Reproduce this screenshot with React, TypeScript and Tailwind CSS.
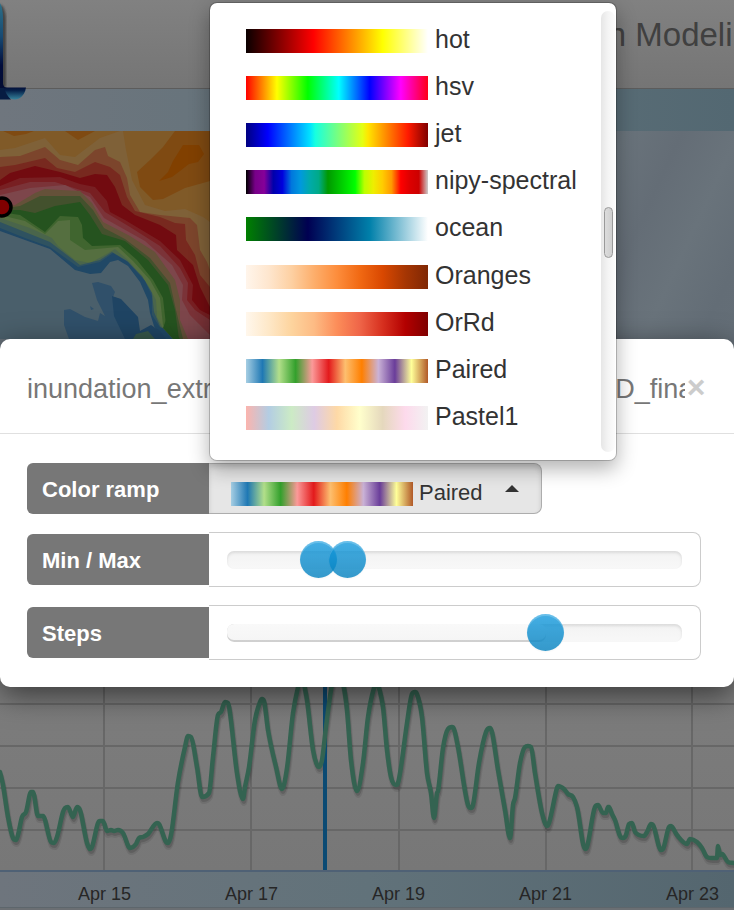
import { useState } from "react";

type Ramp = { name: string; fill: string };

const paired =
  "bg-[linear-gradient(to_right,#a6cee3,#1f78b4,#b2df8a,#33a02c,#fb9a99,#e31a1c,#fdbf6f,#ff7f00,#cab2d6,#6a3d9a,#ffff99,#b15928)]";

const ramps: Ramp[] = [
  { name: "hot", fill: "bg-[linear-gradient(to_right,#0a0000,#ff0000_37%,#ffff00_75%,#ffffff)]" },
  {
    name: "hsv",
    fill: "bg-[linear-gradient(to_right,#ff0000,#ffff00_17%,#00ff00_34%,#00ffff_51%,#0000ff_68%,#ff00ff_85%,#ff0018)]",
  },
  {
    name: "jet",
    fill: "bg-[linear-gradient(to_right,#000080,#0000ff_12%,#00e0ff_35%,#16ffe1_38%,#e4ff13_64%,#ffe600_67%,#ff1a00_89%,#800000)]",
  },
  {
    name: "nipy-spectral",
    fill: "bg-[linear-gradient(to_right,#000000,#770088_5%,#860099_10%,#0000aa_15%,#0000dd_20%,#0077dd_25%,#0099dd_30%,#00aaaa_35%,#00aa88_40%,#009900_45%,#00bb00_50%,#00dd00_55%,#00ff00_60%,#bbff00_65%,#eeee00_70%,#ffcc00_75%,#ff9900_80%,#ff0000_85%,#dd0000_90%,#cc0000_95%,#cccccc)]",
  },
  { name: "ocean", fill: "bg-[linear-gradient(to_right,#008000,#000052_34%,#0080aa_68%,#ffffff)]" },
  {
    name: "Oranges",
    fill: "bg-[linear-gradient(to_right,#fff5eb,#fee6ce,#fdd0a2,#fdae6b,#fd8d3c,#f16913,#d94801,#a63603,#7f2704)]",
  },
  {
    name: "OrRd",
    fill: "bg-[linear-gradient(to_right,#fff7ec,#fee8c8,#fdd49e,#fdbb84,#fc8d59,#ef6548,#d7301f,#b30000,#7f0000)]",
  },
  { name: "Paired", fill: paired },
  {
    name: "Pastel1",
    fill: "bg-[linear-gradient(to_right,#fbb4ae,#b3cde3,#ccebc5,#decbe4,#fed9a6,#ffffcc,#e5d8bd,#fddaec,#f2f2f2)]",
  },
];

const contours: [string, string][] = [
  ["#7f6138", "0,150 15,148 45,138 60,155 75,157 100,138 120,131 123,131 126,150 132,180 145,205 165,211 185,209 203,217 210,222"],
  ["#7c452c", "0,157 20,156 45,147 60,160 78,165 95,150 105,147 108,156 120,162 127,178 130,195 140,212 160,215 190,218 197,225 200,250 207,262 210,270"],
  ["#78291f", "0,167 15,165 45,158 57,168 75,172 95,162 110,167 120,175 127,197 135,211 160,217 175,223 185,224 186,240 195,255 200,275 210,287"],
  ["#720b10", "0,180 10,173 35,166 60,172 80,178 95,174 107,175 115,187 122,205 135,215 160,225 176,235 177,250 193,265 200,287 210,307"],
  ["#781f22", "0,186 20,178 60,177 80,184 95,187 107,201 110,212 125,220 160,241 180,260 193,285 192,300 200,310 210,315"],
  ["#7b3338", "0,190 30,182 55,182 90,193 105,212 130,227 160,246 180,268 188,283 187,300 195,310 210,320"],
  ["#7d464b", "0,195 30,188 65,185 90,197 104,218 145,241 172,265 183,285 182,300 190,315 200,325 210,335"],
  ["#655139", "0,208 15,205 35,193 45,189 60,190 80,191 92,203 103,222 130,236 155,252 175,280 180,300 180,320 188,339"],
  ["#43512d", "0,209 20,206 40,196 60,196 80,196 93,210 104,228 125,239 150,258 170,283 176,310 183,339"],
  ["#25531f", "0,210 20,210 35,213 55,206 80,202 90,215 102,234 125,241 148,260 168,285 175,310 179,339"],
  ["#40652f", "0,212 20,215 45,232 60,216 78,217 82,225 83,238 92,246 120,245 137,260 153,280 163,298 166,325 174,339"],
  ["#556f40", "0,215 25,221 45,234 58,221 70,220 70,240 85,250 118,247 133,261 150,280 160,298 163,325 173,339"],
  ["#4a654b", "0,218 30,228 52,238 58,246 75,260 90,263 103,256 115,249 130,262 148,285 156,300 157,317 165,332 172,339"],
  ["#2f5260", "0,222 30,234 50,242 80,265 100,260 112,252 127,261 142,276 152,293 154,312 160,326 171,339"],
  ["#204866", "0,228 25,238 50,247 78,267 100,262 113,253 128,262 145,281 152,296 152,315 161,329 170,339"],
  ["#4a5f6b", "0,231 25,240 50,249 75,270 90,274 101,273 110,262 118,260 128,266 140,282 148,300 150,313 154,326 165,339"],
];

const series =
  "0,772 3,785 8,817 13,838 16,840 18,835 22,817 26,812 31,792 33,792 38,816 43,816 51,842 54,843 57,837 63,812 65,808 68,807 73,817 77,807 80,810 87,843 90,849 92,847 98,823 100,821 103,821 107,831 111,830 114,831 118,830 123,833 130,848 136,844 139,838 143,837 148,834 157,823 159,824 166,842 168,843 171,835 178,782 185,747 188,736 191,737 197,767 202,797 209,793 213,757 218,715 221,712 225,702 228,703 230,713 237,773 243,799 245,787 249,767 255,720 260,702 262,699 264,701 268,730 276,767 282,789 287,768 293,713 299,683 302,672 304,684 307,700 313,750 317,765 319,767 322,760 326,727 331,690 337,665 344,688 347,710 351,760 357,791 363,763 368,717 374,688 377,682 379,688 383,707 387,750 391,777 396,785 398,783 401,767 407,723 412,694 415,692 417,694 422,717 427,773 431,793 434,818 437,793 438,791 443,748 448,729 452,727 454,729 458,747 468,805 471,808 473,805 479,763 486,732 490,728 492,732 498,770 505,810 510,838 513,805 515,798 520,763 525,747 528,746 531,747 535,773 542,813 547,826 549,823 557,788 558,786 564,789 568,794 573,797 577,807 585,849 587,847 595,807 598,805 603,813 606,813 608,807 609,807 612,814 615,820 620,836 623,838 626,835 629,824 632,823 635,832 644,836 647,832 651,824 653,825 661,850 663,849 669,827 671,826 677,835 687,844 690,839 697,842 702,848 707,857 711,858 717,858 718,846 720,855 722,854 728,862 734,863";

/** Monotone cubic through the points, so that peaks are round and never overshoot. */
function smoothPath(source: string): string {
  const pts = source.split(" ").map((p) => p.split(",").map(Number));
  const slope = pts.slice(1).map((p, i) => (p[1] - pts[i][1]) / (p[0] - pts[i][0]));
  const tangent = pts.map((_, i) => {
    if (i === 0) return slope[0];
    if (i === pts.length - 1) return slope[i - 1];
    const a = slope[i - 1];
    const b = slope[i];
    if (a * b <= 0) return 0;
    return Math.sign(a) * Math.min(Math.abs(a + b) / 2, 3 * Math.abs(a), 3 * Math.abs(b));
  });
  return pts.reduce((d, [x, y], i) => {
    if (i === 0) return `M${x} ${y}`;
    const [px, py] = pts[i - 1];
    const h = (x - px) / 3;
    return `${d}C${px + h} ${py + tangent[i - 1] * h} ${x - h} ${y - tangent[i] * h} ${x} ${y}`;
  }, "");
}

const seriesPath = smoothPath(series);

const days = ["Apr 15", "Apr 17", "Apr 19", "Apr 21", "Apr 23"];

const rangeClass =
  "pointer-events-none [grid-area:1/1] m-0 h-[37px] w-full appearance-none bg-transparent [&::-webkit-slider-thumb]:pointer-events-auto [&::-webkit-slider-thumb]:size-[37px] [&::-webkit-slider-thumb]:appearance-none [&::-webkit-slider-thumb]:rounded-full [&::-webkit-slider-thumb]:bg-linear-to-b [&::-webkit-slider-thumb]:from-[#149bdf] [&::-webkit-slider-thumb]:to-[#0480be] [&::-webkit-slider-thumb]:opacity-80 [&::-webkit-slider-thumb]:shadow-[inset_0_2px_0_rgba(255,255,255,0.2),0_1px_2px_rgba(0,0,0,0.05)]";

const trackClass =
  "[grid-area:1/1] mx-[18px] h-[18px] self-center overflow-hidden rounded-[7px] bg-linear-to-b from-[#f3f3f3] to-[#f8f8f8] shadow-[inset_0_2px_3px_rgba(0,0,0,0.1)]";

const boxClass = "grid h-[55px] grow items-center rounded-r-[8px] border border-l-0 border-[#ccc]";
const labelClass =
  "flex h-[51px] w-[182px] shrink-0 items-center rounded-l-[6px] bg-[#777] pt-[2px] pl-[15px] text-[22px] leading-[28px] font-bold text-white";

function Header() {
  return (
    <header className="flex h-[89px] shrink-0 border-b border-[#5c5c5c] bg-linear-to-b from-[#818181] to-[#757575]">
      <svg className="relative z-10 h-[100px] w-[40px] shrink-0" viewBox="0 0 40 100" aria-hidden="true">
        <defs>
          <linearGradient id="stem" x1="0" y1="0" x2="0" y2="1">
            <stop offset="0" stopColor="#2c6f87" />
            <stop offset="0.35" stopColor="#174a73" />
            <stop offset="0.65" stopColor="#020d3c" />
            <stop offset="1" stopColor="#030b2e" />
          </linearGradient>
          <linearGradient id="foot" x1="0" y1="0" x2="0" y2="1">
            <stop offset="0" stopColor="#04103a" />
            <stop offset="0.25" stopColor="#062049" />
            <stop offset="1" stopColor="#35819a" />
          </linearGradient>
          <filter id="soft">
            <feGaussianBlur stdDeviation="1" />
          </filter>
        </defs>
        <path d="M0 4Q6 8 6 20V87H0Z" fill="#333" opacity="0.75" filter="url(#soft)" />
        <path d="M0 3Q3 8 3 18V84Q4 88 8 88V99H0Z" fill="url(#stem)" />
        <path d="M3 87.500H26Q25 95 19 98.500Q14 100.500 9 98Q4 95 3 87.500Z" fill="url(#foot)" />
        <path d="M0 88H4Q6 95 11 99.500H0Z" fill="#071c42" />
      </svg>
      <h1 className="ml-[432px] shrink-0 text-[33px] leading-[70px] whitespace-nowrap text-[#404040]">
        Inundation Modeling
      </h1>
    </header>
  );
}

function MapView() {
  return (
    <section
      aria-label="Map"
      className="h-[460px] shrink-0 bg-[#646e77] bg-[linear-gradient(115deg,#646e77_60%,#69737b_66%,#646d76_72%,#69737b_78%,#636d76_84%,#68727a)]"
    >
      <svg className="h-[208px] w-[210px]" viewBox="0 131 210 208" aria-hidden="true">
        <rect y="131" width="210" height="208" fill="#805a28" />
        <g fill="#7f4a12">
          <path d="M3 131 14 136 26 134 34 131ZM65 131 78 140 95 131Z" />
          <path d="M175 131 163 147 150 160 137 172 140 187 153 200 163 199 185 188 210 181V131Z" />
        </g>
        <path d="M183 145H199L204 154 198 162 189 164 180 171 172 177 159 181 168 172 173 161Z" fill="#814000" />
        {contours.map(([color, pts]) => (
          <polygon key={color} fill={color} points={`${pts} 210,339 0,339`} />
        ))}
        {/* shore on the inland side of the bay */}
        <path d="M165 339 154 326 163 328 173 339Z" fill="#204866" />
        <polygon fill="#25531f" points="163,328 166,320 172,330 180,339 173,339" />
        <path
          d="M92 283 98 282 111 286 115 292 113 297 125 315 130 339H69L64 325V310L70 309 85 317 98 321 100 313 105 316 97 300ZM90 306 94 309 91 310Z"
          fill="#30506a"
        />
        <path d="M112 296 121 299 138 317 140 331 151 325 160 331 166 339H125L114 316Z" fill="#1f4463" />
        <path d="M136 334 148 331 155 339H133Z" fill="#36574a" />
        <circle cx="2" cy="207" r="9" fill="#800000" stroke="#000" strokeWidth="3.500" />
      </svg>
    </section>
  );
}

function Chart() {
  return (
    <section aria-label="Water level" className="shrink-0">
      <svg
        className="block h-[279px] w-full bg-linear-to-b from-[#7f7f7f] to-[#777]"
        viewBox="0 591 734 279"
        preserveAspectRatio="xMinYMin slice"
        aria-hidden="true"
      >
        <g stroke="#676767" strokeWidth="2">
          {[704, 746, 788, 830].map((y) => (
            <line key={y} x1="0" x2="734" y1={y} y2={y} />
          ))}
          {[104, 251, 399, 546, 692].map((x) => (
            <line key={x} x1={x} x2={x} y1="591" y2="870" />
          ))}
        </g>
        <g fill="none" strokeLinejoin="round" strokeLinecap="round">
          <path d={seriesPath} stroke="#000" strokeOpacity="0.08" strokeWidth="6" transform="translate(1 4)" />
          <path d={seriesPath} stroke="#000" strokeOpacity="0.13" strokeWidth="4" transform="translate(1 3)" />
          <line x1="325" x2="325" y1="591" y2="870" stroke="#0b4a73" strokeWidth="4" />
          <path d={seriesPath} stroke="#346351" strokeWidth="4.500" />
        </g>
      </svg>
      <ul className="flex h-[38px] border-t-2 border-b border-t-[#4f6175] border-b-[#5d666c] bg-linear-to-r from-[#6e757d] via-[#61727a] to-[#54666f] pl-[31px] text-[18px] leading-[44px] text-[#262626]">
        {days.map((d) => (
          <li key={d} className="w-[147px] shrink-0 text-center">
            {d}
          </li>
        ))}
      </ul>
      <div className="h-[2px] bg-[#6b6f73]" />
    </section>
  );
}

function RampMenu({ selected, onPick }: { selected: string; onPick: (name: string) => void }) {
  return (
    <div className="absolute bottom-full left-0 z-20 mb-[2px] flex h-[459px] w-[408px] rounded-[8px] border border-black/20 bg-white bg-clip-padding py-[8px] shadow-[0_8px_20px_rgba(0,0,0,0.3)]">
      <ul role="listbox" aria-label="Color ramps" className="grid h-[431px] grow grid-rows-9 pt-[6px]">
        {ramps.map((r) => (
          <li key={r.name} role="option" aria-selected={r.name === selected} className="flex">
            <button
              type="button"
              onClick={() => onPick(r.name)}
              className="flex grow items-center gap-[7px] pl-[36px] text-left text-[25px] leading-[36px] text-[#333]"
            >
              <span className={`h-[24px] w-[182px] ${r.fill}`} />
              <span className="pb-[4px]">{r.name}</span>
            </button>
          </li>
        ))}
      </ul>
      <div className="mr-px w-[14px] rounded-[8px] bg-linear-to-r from-[#e6e6e6] via-[#f4f4f4] to-[#fcfcfc] pt-[196px] pl-[3px]">
        <div className="h-[51px] w-[9px] rounded-full border border-[#999] bg-linear-to-r from-[#dcdcdc] to-[#cfcfcf]" />
      </div>
    </div>
  );
}

export default function App() {
  const [ramp, setRamp] = useState("Paired");
  const [open, setOpen] = useState(true);
  const [min, setMin] = useState(200);
  const [max, setMax] = useState(264);
  const [steps, setSteps] = useState(14);
  const current = ramps.find((r) => r.name === ramp) ?? ramps[0];

  return (
    <div className="relative flex min-h-screen flex-col overflow-hidden bg-[#7b7b7b] font-['Liberation_Sans',Arial,sans-serif]">
      <Header />
      <div className="h-[42px] shrink-0 bg-linear-to-r from-[#6f767e] via-[#61727a] to-[#536872]" />
      <MapView />
      <Chart />

      <div
        role="dialog"
        aria-labelledby="layer-title"
        className="absolute inset-x-0 top-[339px] z-10 rounded-[10px] bg-white pb-[27px] shadow-[0_8px_30px_rgba(0,0,0,0.55)]"
      >
        <div className="flex h-[95px] items-center border-b border-[#e0e0e0] px-[27px] pt-[5px]">
          <h2
            id="layer-title"
            className="min-w-0 flex-1 overflow-hidden text-[27px] leading-[40px] whitespace-nowrap text-[#777]"
          >
            inundation_extreme_water_level_ADCIRC_ext_2D_final
          </h2>
          <button
            type="button"
            aria-label="Close"
            className="flex w-[22px] justify-center pb-[4px] text-[32px] leading-[36px] font-bold text-[#ccc]"
          >
            ×
          </button>
        </div>

        <div className="flex flex-col gap-[18px] px-[27px] pt-[29px]">
          <div className="flex items-center">
            <span id="ramp-label" className={labelClass}>
              Color ramp
            </span>
            <div className="relative">
              <button
                type="button"
                aria-labelledby="ramp-label"
                aria-haspopup="listbox"
                aria-expanded={open}
                onClick={() => setOpen(!open)}
                className="flex h-[51px] w-[333px] items-center gap-[6px] rounded-r-[8px] border border-l-0 border-[#adadad] bg-[#e6e6e6] px-[22px] pt-[10px] text-[22px] leading-[28px] text-[#333] shadow-[inset_0_3px_5px_rgba(0,0,0,0.125)]"
              >
                <span className={`h-[24px] w-[182px] ${current.fill}`} />
                <span className="pb-[2px]">{ramp}</span>
                <svg className="mb-[10px] ml-auto h-[7px] w-[14px]" viewBox="0 0 14 7" aria-hidden="true">
                  <path d="M0 7 7 0 14 7Z" fill="#333" />
                </svg>
              </button>
              {open && <RampMenu selected={ramp} onPick={setRamp} />}
            </div>
          </div>

          <div className="flex items-center pr-[6px]">
            <label htmlFor="min" className={labelClass}>
              Min / Max
            </label>
            <div className={boxClass}>
              <div className={trackClass} />
              <input
                id="min"
                type="range"
                min={0}
                max={1000}
                value={min}
                onChange={(e) => setMin(Number(e.target.value))}
                className={rangeClass}
              />
              <input
                aria-label="Max"
                type="range"
                min={0}
                max={1000}
                value={max}
                onChange={(e) => setMax(Number(e.target.value))}
                className={rangeClass}
              />
            </div>
          </div>

          <div className="flex items-center pr-[6px]">
            <label htmlFor="steps" className={labelClass}>
              Steps
            </label>
            <div className={boxClass}>
              <div className={trackClass}>
                <div
                  className="h-full rounded-[7px] bg-linear-to-b from-[#f9f9f9] to-[#f5f5f5] shadow-[inset_0_-2px_0_rgba(0,0,0,0.15)]"
                  style={{ width: `${steps * 5}%` }}
                />
              </div>
              <input
                id="steps"
                type="range"
                min={0}
                max={20}
                value={steps}
                onChange={(e) => setSteps(Number(e.target.value))}
                className={rangeClass}
              />
            </div>
          </div>
        </div>
      </div>
    </div>
  );
}
